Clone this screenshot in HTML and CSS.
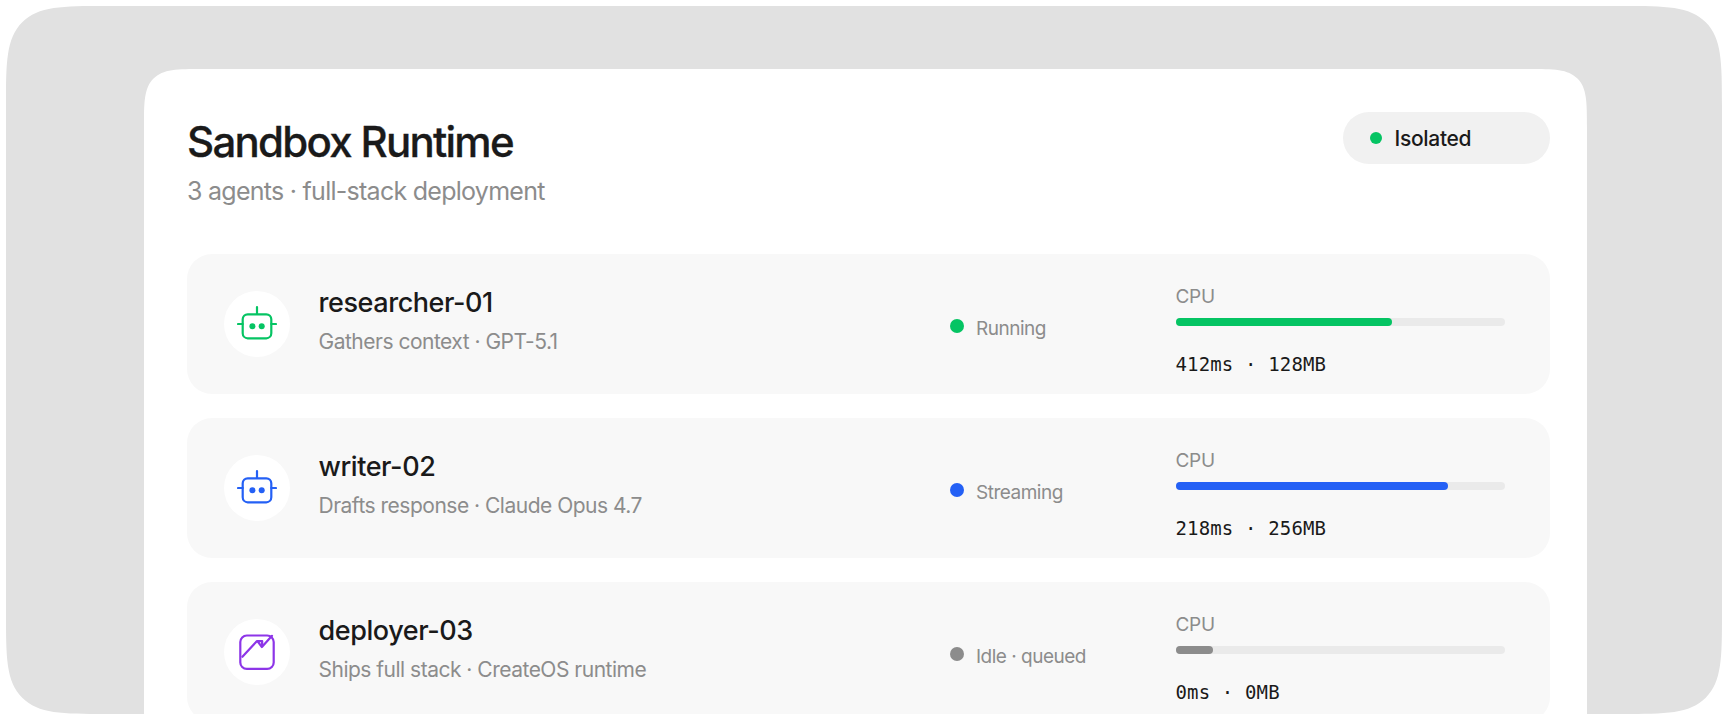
FILE: index.html
```
<!DOCTYPE html>
<html lang="en">
<head>
    <meta charset="UTF-8">
    <meta name="viewport" content="width=device-width, initial-scale=1.0">
    <title>Sandbox Runtime</title>
    <link rel="stylesheet" href="styles.css">
</head>
<body>
    <div class="frame">
        <main class="panel">
            <header class="panel-header">
                <div>
                    <h1>Sandbox Runtime</h1>
                    <p class="subtitle">3 agents · full-stack deployment</p>
                </div>
                <div class="badge"><span class="badge-dot"></span><span>Isolated</span></div>
            </header>

            <div class="agents">
                <!-- Researcher -->
                <section class="agent green">
                    <div class="avatar">
                        <svg class="icon" viewBox="0 0 40 40">
                            <rect x="5.7" y="10.3" width="28.6" height="24" rx="5"/>
                            <path d="M20 3v7M1 20h4.7M34.3 20H39"/>
                            <circle class="eye" cx="15.4" cy="22.3" r="3"/>
                            <circle class="eye" cx="24.7" cy="22.3" r="3"/>
                        </svg>
                    </div>
                    <div class="info">
                        <h2>researcher-01</h2>
                        <p class="about">Gathers context · GPT-5.1</p>
                    </div>
                    <div class="status"><span class="status-dot"></span><span class="status-text">Running</span></div>
                    <div class="usage">
                        <div class="label">CPU</div>
                        <div class="bar"><div class="fill" style="width: 65.8%"></div></div>
                        <div class="stats">412ms · 128MB</div>
                    </div>
                </section>

                <!-- Writer -->
                <section class="agent blue">
                    <div class="avatar">
                        <svg class="icon" viewBox="0 0 40 40">
                            <rect x="5.7" y="10.3" width="28.6" height="24" rx="5"/>
                            <path d="M20 3v7M1 20h4.7M34.3 20H39"/>
                            <circle class="eye" cx="15.4" cy="22.3" r="3"/>
                            <circle class="eye" cx="24.7" cy="22.3" r="3"/>
                        </svg>
                    </div>
                    <div class="info">
                        <h2>writer-02</h2>
                        <p class="about">Drafts response · Claude Opus 4.7</p>
                    </div>
                    <div class="status"><span class="status-dot"></span><span class="status-text">Streaming</span></div>
                    <div class="usage">
                        <div class="label">CPU</div>
                        <div class="bar"><div class="fill" style="width: 82.8%"></div></div>
                        <div class="stats">218ms · 256MB</div>
                    </div>
                </section>

                <!-- Deployer -->
                <section class="agent idle">
                    <div class="avatar">
                        <svg class="icon purple" viewBox="0 0 40 40">
                            <rect x="3.3" y="3.5" width="33.4" height="33.4" rx="6.5"/>
                            <path d="M5.4 24.8L19.8 9.2h5.4l-.3 5.8L35 3.8M20.6 9.4l4.3 5.6"/>
                        </svg>
                    </div>
                    <div class="info">
                        <h2>deployer-03</h2>
                        <p class="about">Ships full stack · CreateOS runtime</p>
                    </div>
                    <div class="status"><span class="status-dot"></span><span class="status-text">Idle · queued</span></div>
                    <div class="usage">
                        <div class="label">CPU</div>
                        <div class="bar"><div class="fill" style="width: 11.4%"></div></div>
                        <div class="stats">0ms · 0MB</div>
                    </div>
                </section>
            </div>
        </main>
    </div>
</body>
</html>
```
FILE: styles.css
```
* { box-sizing: border-box; }
body { margin: 0; padding: 6px; height: 720px; overflow: hidden; background: #fff; color: #1a1a1a; font-family: Inter, sans-serif; }
h1, h2, p { margin: 0; }

.frame { height: 708px; overflow: hidden; padding: 63px 135px 0 138px; background: #e1e1e1; border-radius: 102px; corner-shape: squircle; }
.panel { height: 720px; padding: 43px 37.5px 0 43px; background: #fff; border-radius: 60px; corner-shape: squircle; }

.panel-header { display: flex; justify-content: space-between; align-items: flex-start; height: 142px; }
h1 { margin-top: 5px; font-size: 42px; line-height: 50px; font-weight: 500; letter-spacing: -1.73px; -webkit-text-stroke: 0.3px #1a1a1a; }
.subtitle { margin-top: 9px; font-size: 25px; line-height: 30px; letter-spacing: -0.73px; color: #8c8c8c; }
.badge { display: flex; align-items: center; gap: 13px; width: 207px; height: 52px; padding-left: 27px; border-radius: 26px; background: #f1f1f1; font-size: 21px; font-weight: 500; letter-spacing: -0.3px; }
.badge-dot { width: 12px; height: 12px; border-radius: 50%; background: #05c463; }

.agents { display: flex; flex-direction: column; gap: 24.2px; }
.agent { --color: #8c8c8c; display: grid; grid-template-columns: 66px 602px 283px 330px; height: 140px; padding-left: 37px; border-radius: 25px; background: #f8f8f8; }
.green { --color: #05c463; }
.blue { --color: #2460f5; }
.purple { --color: #8d35e8; }

.avatar { display: flex; align-items: center; justify-content: center; width: 66px; height: 66px; margin-top: 37px; border-radius: 50%; background: #fff; }
.icon { width: 40px; height: 40px; fill: none; stroke: var(--color); stroke-width: 2.2; stroke-linecap: round; stroke-linejoin: round; }
.eye { fill: var(--color); stroke: none; }

.info { padding: 32px 0 0 28.5px; }
h2 { font-size: 27px; line-height: 34px; font-weight: 500; letter-spacing: -0.43px; }
.about { margin-top: 9px; font-size: 21px; line-height: 26px; letter-spacing: -0.5px; color: #8c8c8c; }

.status { display: flex; padding: 62px 0 0 58px; }
.status-dot { width: 14px; height: 14px; margin: 3px 12px 0 0; border-radius: 50%; background: var(--color); }
.status-text { font-size: 19px; line-height: 26px; letter-spacing: -0.5px; color: #8c8c8c; }

.usage { padding: 30.5px 0 0 0.5px; }
.label { font-size: 19px; line-height: 24px; letter-spacing: -0.3px; color: #8c8c8c; }
.bar { height: 7.5px; margin-top: 9.5px; border-radius: 4px; background: #eaeaea; }
.fill { height: 7.5px; border-radius: 4px; background: var(--color); }
.stats { margin-top: 26px; font-family: "DejaVu Sans Mono", monospace; font-size: 19px; line-height: 24px; letter-spacing: 0.15px; }
```
